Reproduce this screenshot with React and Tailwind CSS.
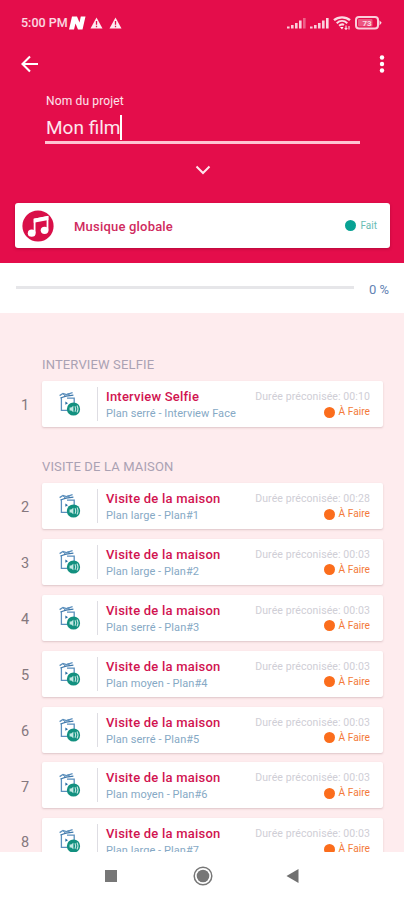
const sections = [
  {
    title: "INTERVIEW SELFIE",
    shots: [
      { id: 1, title: "Interview Selfie", detail: "Plan serré - Interview Face", duration: "00:10" },
    ],
  },
  {
    title: "VISITE DE LA MAISON",
    shots: [
      { id: 2, title: "Visite de la maison", detail: "Plan large - Plan#1", duration: "00:28" },
      { id: 3, title: "Visite de la maison", detail: "Plan large - Plan#2", duration: "00:03" },
      { id: 4, title: "Visite de la maison", detail: "Plan serré - Plan#3", duration: "00:03" },
      { id: 5, title: "Visite de la maison", detail: "Plan moyen - Plan#4", duration: "00:03" },
      { id: 6, title: "Visite de la maison", detail: "Plan serré - Plan#5", duration: "00:03" },
      { id: 7, title: "Visite de la maison", detail: "Plan moyen - Plan#6", duration: "00:03" },
      { id: 8, title: "Visite de la maison", detail: "Plan large - Plan#7", duration: "00:03" },
    ],
  },
];

const WarningIcon = () => (
  <svg width="13" height="12" viewBox="0 0 13 12">
    <path d="M6.5 0.5 12.5 11.5H0.5Z" fill="#fff" fillOpacity="0.92" />
    <path d="M6.5 4v3.8M6.5 8.8v1.4" stroke="#e40d4b" strokeWidth="1.3" />
  </svg>
);

const SignalIcon = ({ weak }) => (
  <svg width="19" height="12" viewBox="0 0 19 12" fill="#fff" fillOpacity="0.8">
    <rect x="0" y="9.5" width="2.6" height="2" />
    <rect x="4" y="8" width="2.6" height="3.5" />
    <rect x="8" y="6" width="2.6" height="5.5" />
    <rect x="12" y="3.5" width="2.6" height="8" />
    <rect x="16" y="1" width="2.6" height="10.5" fillOpacity={weak ? 0.35 : 0.85} />
  </svg>
);

const WifiIcon = () => (
  <svg width="18" height="14" viewBox="0 0 18 14" fill="none" stroke="#fff" strokeOpacity="0.85">
    <path d="M1 4.2C5.4 0.4 12.6 0.4 17 4.2" strokeWidth="2.4" />
    <path d="M3.7 7.2C6.8 4.4 11.2 4.4 14.3 7.2" strokeWidth="2" />
    <path d="M6.1 9.8C7.9 8.2 9.8 8.2 11 9" strokeWidth="2" />
    <path d="M9 13.4 7 11h3.5Z" fill="#fff" stroke="none" />
    <path d="M13 9.5v4M11.7 12 13 13.4l1.3-1.4M16 13.4V10" strokeWidth="1.1" />
  </svg>
);

const BatteryIcon = () => (
  <svg width="27" height="14" viewBox="0 0 27 14">
    <rect x="1" y="1" width="22" height="11.5" rx="3" fill="none" stroke="#fff" strokeOpacity="0.8" strokeWidth="2" />
    <rect x="3" y="3" width="14.5" height="7.5" rx="1" fill="#fff" fillOpacity="0.3" />
    <path d="M24.5 4.2 26.7 6.8 24.5 9.4Z" fill="#fff" fillOpacity="0.85" />
    <text x="12" y="9.8" textAnchor="middle" fontSize="8" fontWeight="700" fill="#fff" fillOpacity="0.8" fontFamily="Roboto, sans-serif">
      73
    </text>
  </svg>
);

const MusicIcon = () => (
  <svg width="32" height="32" viewBox="0 0 32 32">
    <circle cx="16" cy="16" r="15.6" fill="#d90f48" />
    <path d="M12.6 23V9.5L25.5 6.8V19.8" fill="none" stroke="#fff" strokeWidth="1.8" />
    <path d="M11.7 8.8 26.4 6v4L11.7 12.8Z" fill="#fff" />
    <ellipse cx="9.7" cy="23.2" rx="3.9" ry="3.6" fill="#fff" />
    <ellipse cx="22.6" cy="20.3" rx="3.9" ry="3.6" fill="#fff" />
  </svg>
);

// clapperboard with a sound badge
const ShotIcon = () => (
  <svg width="23" height="26" viewBox="0 0 23 26">
    <path d="M1.6 4.6 5 2.4 8.4 3.6 14.6 1.6" fill="none" stroke="#5b8fbd" strokeWidth="1.3" />
    <path d="M2.4 7 8 5.2 15.4 4.2" fill="none" stroke="#3e78ab" strokeWidth="1.3" />
    <path d="M5.4 3 7.6 5.4M10 2.4 12 4.8" stroke="#3e78ab" strokeWidth="1" />
    <path d="M3.4 7V19.4H10M9 7.2H16.2V12" fill="none" stroke="#5b8fbd" strokeWidth="1.3" />
    <path d="M7.4 10.6 10 12.2 7.4 13.8Z" fill="#2369a1" />
    <circle cx="15.5" cy="18" r="6.6" fill="#12907f" />
    <path d="M11.6 16.6h1.6l2.2-1.8v6.4l-2.2-1.8h-1.6Z" fill="#c3e8e3" />
    <path d="M17 15.3q1.4 2.7 0 5.4M19 14.5q2 3.5 0 7" fill="none" stroke="#c3e8e3" strokeWidth="1.1" />
  </svg>
);

const ShotRow = ({ shot }) => (
  <div className="flex h-[46px] items-stretch">
    <div className="flex w-[42px] shrink-0 items-center pt-1 pl-[21px] text-[14.5px] text-[#85787e]">
      {shot.id}
    </div>
    <div className="flex w-[341px] shrink-0 rounded-[2px] bg-white shadow-[0_1px_2px_rgba(110,60,70,0.22)]">
      <div className="w-[55px] shrink-0 pt-[10px] pl-[16px]">
        <ShotIcon />
      </div>
      <div className="mt-[6px] h-[34px] w-px shrink-0 bg-[#dedde3]" />
      <div className="flex flex-1 justify-between pr-[13px] pl-2 whitespace-nowrap">
        <div className="pt-[8px]">
          <div className="text-[13px] leading-[16px] font-medium tracking-[0.22px] text-[#d11350]">
            {shot.title}
          </div>
          <div className="text-[11px] leading-[17px] tracking-[0.06px] text-[#86a9c5]">
            {shot.detail}
          </div>
        </div>
        <div className="w-0 pt-[9px]">
          <div className="flex flex-col items-end">
            <div className="text-[10.5px] leading-[14px] tracking-[0.1px] text-[#cfced6]">
              Durée préconisée: {shot.duration}
            </div>
            <div className="flex items-center gap-1 text-[10.2px] leading-[15px] text-[#f37a39]">
              <span className="mt-[1px] h-[11px] w-[11px] rounded-full bg-[#fb6d1c]" />
              À Faire
            </div>
          </div>
        </div>
      </div>
    </div>
  </div>
);

const StatusBar = () => (
  <div className="flex h-[46px] items-center justify-between pr-[22px] pl-[21px]">
    <div className="flex items-center text-[12.5px] font-medium text-white/85">
      <span className="w-[48px] whitespace-nowrap">5:00 PM</span>
      <svg width="17" height="14" viewBox="0 0 17 14">
        <path d="M3 0.5H8L10.5 6.5 11.8 0.5H16.5L13.5 13.5H9L6.5 7.5 5 13.5H0Z" fill="#fff" />
      </svg>
      <div className="ml-[4px] flex gap-[6px]">
        <WarningIcon />
        <WarningIcon />
      </div>
    </div>
    <div className="flex items-center gap-1">
      <SignalIcon weak />
      <SignalIcon />
      <WifiIcon />
      <BatteryIcon />
    </div>
  </div>
);

export default function App() {
  return (
    <div className="flex h-[900px] w-[404px] flex-col overflow-hidden bg-white font-['Roboto',sans-serif]">
      {/* Header */}
      <header className="h-[263px] shrink-0 bg-[#e40d4b]">
        <StatusBar />

        <div className="flex h-[36px] items-center justify-between pr-[19px] pl-[21px]">
          <svg width="18" height="18" viewBox="0 0 18 18" fill="none" stroke="#fff" strokeWidth="2.1">
            <path d="M17 9H2M9 1.5 1.5 9 9 16.5" />
          </svg>
          <svg width="6" height="18" viewBox="0 0 6 18" fill="#fff">
            <circle cx="3" cy="2.5" r="2.2" />
            <circle cx="3" cy="9" r="2.2" />
            <circle cx="3" cy="15.5" r="2.2" />
          </svg>
        </div>

        {/* Project name */}
        <div className="mr-[44px] ml-[45px] flex h-[62px] flex-col border-b-[3px] border-[#ffc3d2] pt-[12px] pl-px text-white/90">
          <label className="text-[12px] leading-[15px] tracking-[0.15px]">Nom du projet</label>
          <div className="mt-[5px] flex items-center text-[19px] leading-[26px]">
            <span className="translate-y-px">Mon film</span>
            <span className="h-[25px] w-[2px] bg-white" />
          </div>
        </div>

        <div className="flex h-[59px] items-center justify-center pb-[8px] pl-px">
          <svg width="16" height="10" viewBox="0 0 16 10" fill="none" stroke="#ffe5ec" strokeWidth="2">
            <path d="M1.5 1.5 8 8 14.5 1.5" />
          </svg>
        </div>

        {/* Global music */}
        <div className="mx-[15px] flex h-[45px] w-[375px] items-center rounded-[3px] bg-white pr-[13px] pl-[7px] shadow-[0_1px_3px_rgba(90,0,30,0.35)]">
          <MusicIcon />
          <div className="ml-[20px] flex-1 pt-[2px] text-[13px] font-medium tracking-[0.2px] text-[#d02a5e]">
            Musique globale
          </div>
          <div className="flex items-center gap-1 text-[10px] text-[#68bcb4]">
            <span className="h-[11px] w-[11px] rounded-full bg-[#08a294]" />
            Fait
          </div>
        </div>
      </header>

      {/* Progress */}
      <div className="flex h-[50px] shrink-0 items-center pr-[15px] pl-[16px]">
        <div className="mb-[2px] h-[3px] w-[338px] bg-[#e6e6e9]" />
        <div className="flex-1 pt-[3px] text-right text-[13px] text-[#6383b3]">0 %</div>
      </div>

      {/* Shots */}
      <main className="h-[539px] shrink-0 overflow-hidden bg-[#feecee] pt-[43px]">
        {sections.map((section) => (
          <section key={section.title} className="mb-[31px]">
            <h2 className="mb-[7px] pl-[42px] text-[13px] leading-[18px] tracking-[0.15px] text-[#aaa1b3]">
              {section.title}
            </h2>
            <div className="flex flex-col gap-[9.9px]">
              {section.shots.map((shot) => (
                <ShotRow key={shot.id} shot={shot} />
              ))}
            </div>
          </section>
        ))}
      </main>

      {/* Navigation bar */}
      <nav className="flex h-[48px] items-center bg-white">
        <span className="ml-[105px] h-3 w-3 bg-[#777]" />
        <svg className="ml-[76px]" width="20" height="20" viewBox="0 0 20 20">
          <circle cx="10" cy="10" r="8.8" fill="none" stroke="#777" strokeWidth="1.5" />
          <circle cx="10" cy="10" r="6.3" fill="#777" />
        </svg>
        <svg className="ml-[73px]" width="13" height="14" viewBox="0 0 13 14">
          <path d="M12.5 0V14L0.5 7Z" fill="#707070" />
        </svg>
      </nav>
    </div>
  );
}
